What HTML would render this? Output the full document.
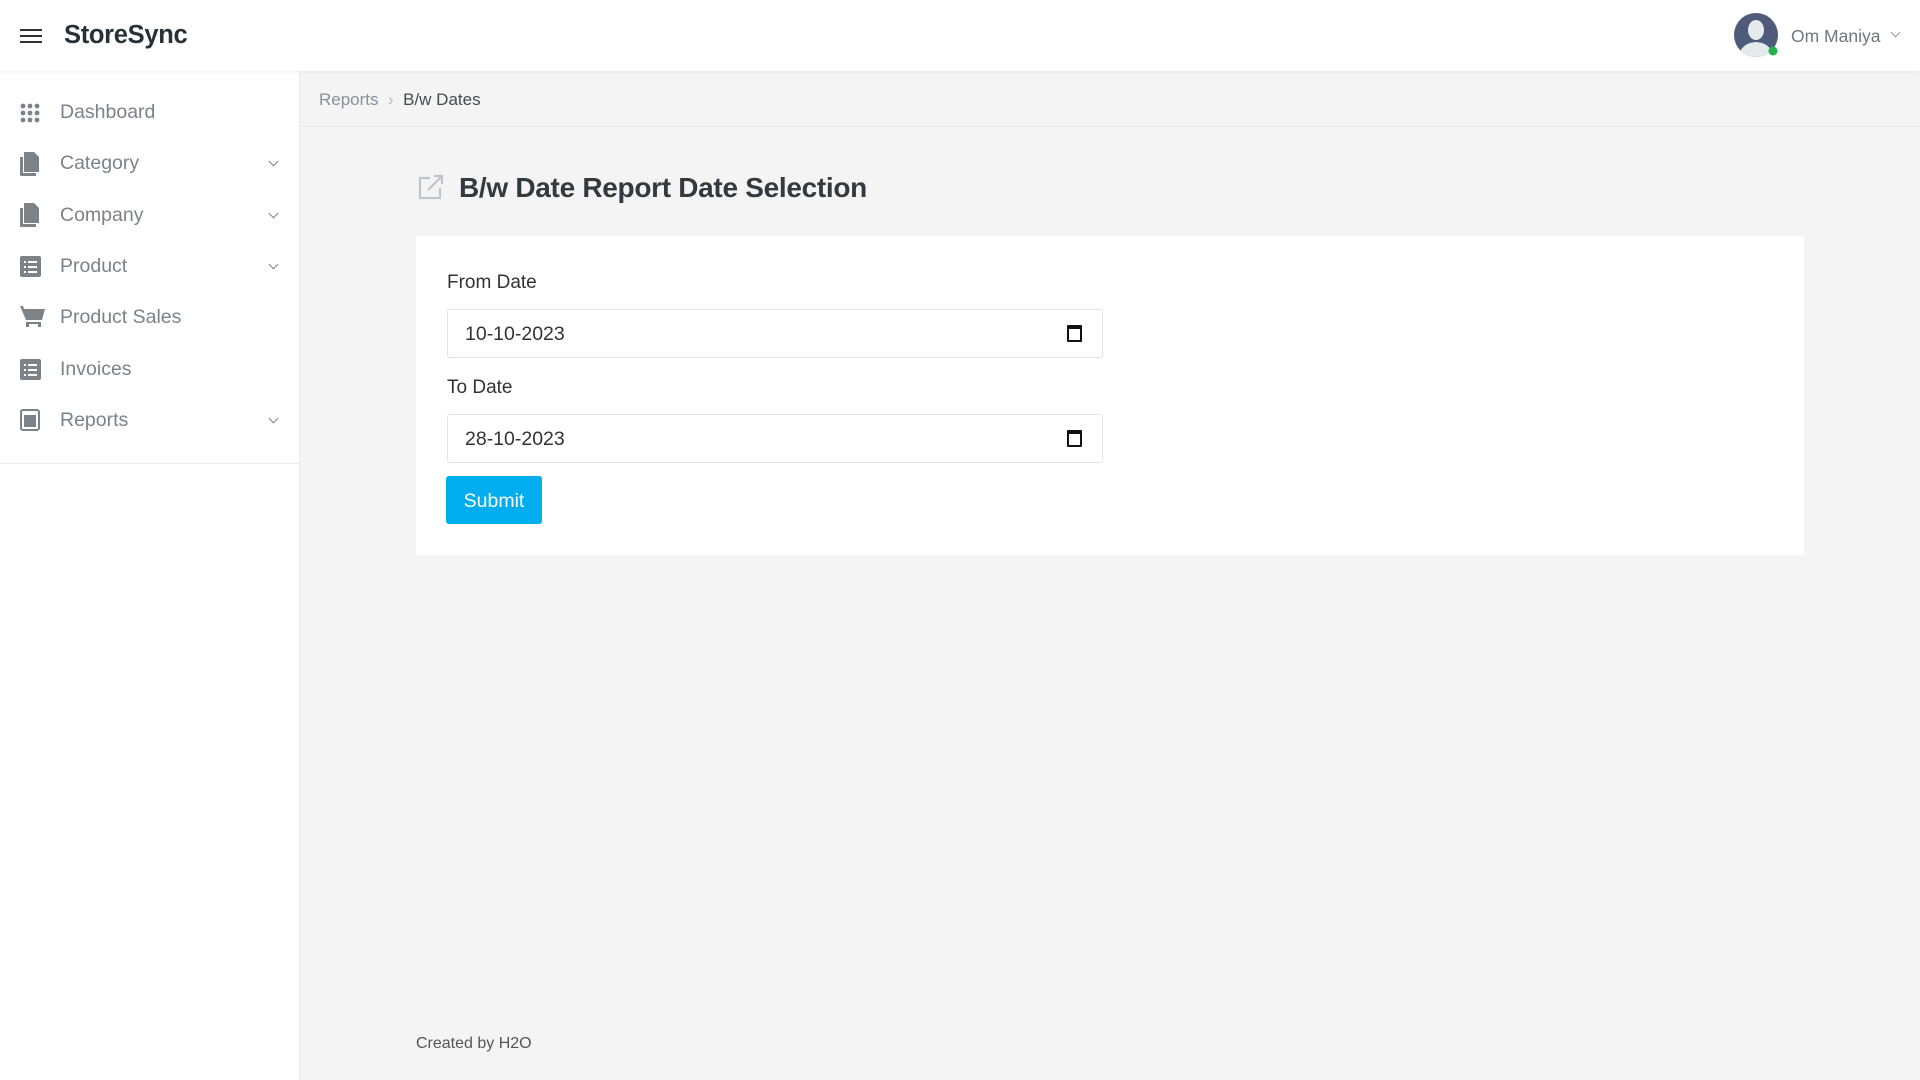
<!DOCTYPE html>
<html><head><meta charset="utf-8"><style>
*{box-sizing:border-box;margin:0;padding:0}
body{width:1920px;height:1080px;background:#f4f4f4;font-family:"Liberation Sans",sans-serif;position:relative;overflow:hidden}
.hdr{position:absolute;left:0;top:0;width:1920px;height:71px;background:#fff;box-shadow:0 1px 4px rgba(0,0,0,.06);z-index:2}
.side{position:absolute;left:0;top:71px;width:300px;height:1009px;background:#fff;border-right:1px solid #ececec}
.side .menu{border-bottom:1px solid #ececec;height:393px;padding-top:16px}
.item{height:51.3px;display:flex;align-items:center;position:relative;color:#7b8288;font-size:19.5px}
.item svg{position:absolute;left:20px}
.item span{position:absolute;left:60px}
.item .chev{position:absolute;left:270px;width:7px;height:7px;border-right:1.6px solid #7b8288;border-bottom:1.6px solid #7b8288;transform:rotate(45deg);top:20px}
.bc{position:absolute;left:300px;top:71px;width:1620px;height:56px;border-bottom:1px solid #e8e8e8;font-size:17px;color:#8a9096;padding:19px 0 0 19px}
.bc b{font-weight:normal;color:#454b50}
.title{position:absolute;left:459px;top:172px;font-size:28px;font-weight:bold;color:#333a3f;letter-spacing:-.3px}
.card{position:absolute;left:416px;top:236px;width:1388px;height:319px;background:#fff}
.lbl{position:absolute;left:31px;font-size:19px;color:#333}
.inp{position:absolute;left:31px;width:656px;height:49px;border:1.5px solid #e4e4e4;border-radius:3px;font-size:19.5px;color:#333;padding:13px 0 0 17px}
.cal{position:absolute;right:20px;top:15px;width:15px;height:17px;border:2px solid #111;border-top-width:4px;border-radius:1px}
.btn{position:absolute;left:30px;top:240px;width:96px;height:48px;background:#00aeef;color:#fff;border-radius:3px;font-size:19.5px;text-align:center;line-height:50px}
.foot{position:absolute;left:416px;top:1035px;font-size:16px;color:#555}
</style></head><body>
<div class="hdr">
 <svg style="position:absolute;left:20px;top:28px" width="22" height="16"><rect y="1" width="22" height="2" fill="#333"/><rect y="7" width="22" height="2" fill="#333"/><rect y="13" width="22" height="2" fill="#333"/></svg>
 <div style="position:absolute;left:64px;top:21px;font-size:25.5px;font-weight:bold;color:#263238;letter-spacing:-.3px">StoreSync</div>
 <svg style="position:absolute;left:1734px;top:13px" width="46" height="46"><defs><clipPath id="c"><circle cx="22" cy="22" r="22"/></clipPath></defs><circle cx="22" cy="22" r="22" fill="#4f5b7a"/><g clip-path="url(#c)" fill="#e6eaec"><ellipse cx="22" cy="17" rx="8" ry="10"/><path d="M4 46 Q6 30 22 29 Q38 30 40 46Z"/></g><circle cx="39" cy="38" r="4.5" fill="#22b34c"/></svg>
 <div style="position:absolute;left:1791px;top:26px;font-size:17.5px;color:#6f777d">Om Maniya</div>
 <div style="position:absolute;left:1892px;top:29px;width:7px;height:7px;border-right:1.3px solid #999;border-bottom:1.3px solid #999;transform:rotate(45deg)"></div>
</div>
<div class="side"><div class="menu">
 <div class="item"><svg width="20" height="20" fill="#7b8288"><circle cx="3" cy="3" r="2.4"/><circle cx="10" cy="3" r="2.4"/><circle cx="17" cy="3" r="2.4"/><circle cx="3" cy="10" r="2.4"/><circle cx="10" cy="10" r="2.4"/><circle cx="17" cy="10" r="2.4"/><circle cx="3" cy="17" r="2.4"/><circle cx="10" cy="17" r="2.4"/><circle cx="17" cy="17" r="2.4"/></svg><span>Dashboard</span></div>
 <div class="item"><svg width="20" height="24" fill="#7b8288"><path d="M0 5h3v16h13v3H1a1 1 0 0 1-1-1z"/><path d="M4 0h10l5 5v15H4z"/></svg><span>Category</span><i class="chev"></i></div>
 <div class="item"><svg width="20" height="24" fill="#7b8288"><path d="M0 5h3v16h13v3H1a1 1 0 0 1-1-1z"/><path d="M4 0h10l5 5v15H4z"/></svg><span>Company</span><i class="chev"></i></div>
 <div class="item"><svg width="21" height="21"><rect width="21" height="21" rx="2" fill="#7b8288"/><g fill="#fff"><rect x="4" y="5" width="2" height="2"/><rect x="8" y="5" width="9" height="2"/><rect x="4" y="10" width="2" height="2"/><rect x="8" y="10" width="9" height="2"/><rect x="4" y="15" width="2" height="2"/><rect x="8" y="15" width="9" height="2"/></g></svg><span>Product</span><i class="chev"></i></div>
 <div class="item"><svg width="25" height="24" fill="#7b8288"><path d="M0 0h3l1 3h21l-3 11H6z"/><rect x="6" y="16" width="15" height="2"/><rect x="6" y="18" width="3" height="3"/><rect x="18" y="18" width="3" height="3"/></svg><span>Product Sales</span></div>
 <div class="item"><svg width="21" height="21"><rect width="21" height="21" rx="2" fill="#7b8288"/><g fill="#fff"><rect x="4" y="5" width="2" height="2"/><rect x="8" y="5" width="9" height="2"/><rect x="4" y="10" width="2" height="2"/><rect x="8" y="10" width="9" height="2"/><rect x="4" y="15" width="2" height="2"/><rect x="8" y="15" width="9" height="2"/></g></svg><span>Invoices</span></div>
 <div class="item"><svg width="20" height="22"><rect x="1" y="1" width="18" height="20" rx="2" fill="none" stroke="#7b8288" stroke-width="2"/><rect x="4" y="6" width="12" height="12" fill="#7b8288"/></svg><span>Reports</span><i class="chev"></i></div>
</div></div>
<div class="bc">Reports &nbsp;<span style="color:#bbb">›</span>&nbsp; <b>B/w Dates</b></div>
<svg style="position:absolute;left:418px;top:174px" width="26" height="26" fill="none" stroke="#c2c5c8" stroke-width="2.2"><path d="M12 4H2v20h20V14"/><path d="M10 16L24 2M16 2h8v8"/></svg>
<div class="title">B/w Date Report Date Selection</div>
<div class="card">
 <div class="lbl" style="top:36px">From Date</div>
 <div class="inp" style="top:73px">10-10-2023<i class="cal"></i></div>
 <div class="lbl" style="top:141px">To Date</div>
 <div class="inp" style="top:178px">28-10-2023<i class="cal"></i></div>
 <div class="btn">Submit</div>
</div>
<div class="foot">Created by H2O</div>
</body></html>
